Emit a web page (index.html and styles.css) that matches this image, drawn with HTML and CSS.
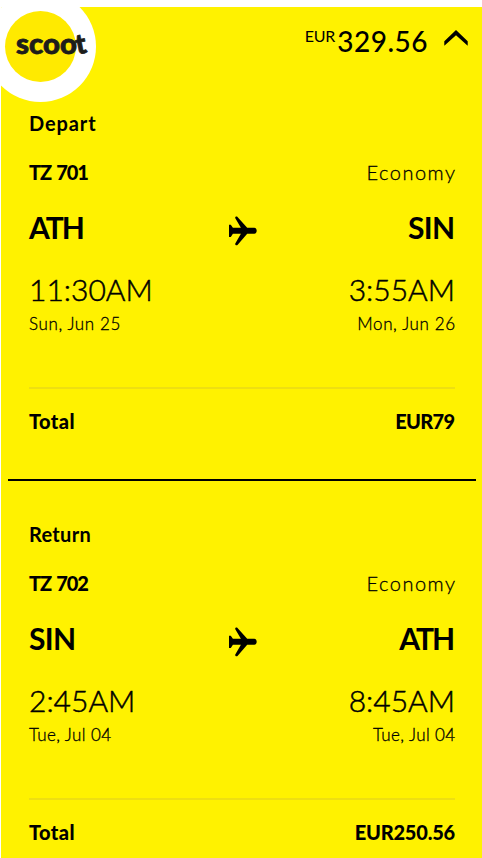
FILE: index.html
```html
<!DOCTYPE html>
<html lang="en">
<head>
	<title>Scoot fare summary</title>
	<meta charset="utf-8">
	<link rel="stylesheet" href="styles.css">
</head>
<body>
	<svg width="0" height="0" class="defs">
		<symbol id="plane" viewBox="0 0 28 30">
			<path d="M0 8.7h1.8l2.1 3.1h8L6.3 2.3C5.7 1 7.5-.1 8.5 1l9.7 10.8h7.1c3.2 0 3.2 6 0 6h-7.1L8.5 28.9c-1 1-2.8 0-2.2-1.4l5.6-9.7h-8L1.8 21H0z"/>
		</symbol>
	</svg>
	<main class="card">
		<header class="header">
			<svg class="logo" width="111" height="111" viewBox="0 0 111 111">
				<circle cx="55.5" cy="55.5" r="55.5" fill="#fff"/>
				<circle cx="55.5" cy="55.5" r="35.5" fill="#ffea00"/>
				<text class="logo-text" x="31" y="63" textLength="61" lengthAdjust="spacingAndGlyphs">scoo</text>
				<text class="logo-text" x="90.5" y="62.5" transform="rotate(-11 96 54)">t</text>
			</svg>
			<div class="price"><span class="currency">EUR</span><span class="amount">329.56</span></div>
			<svg class="chevron" width="24" height="17" viewBox="0 0 24 17">
				<path d="M12 0l11.7 11.2v4.6L12 5.2.3 15.8v-4.6z"/>
			</svg>
		</header>

		<section class="leg">
			<h2 class="title depart">Depart</h2>
			<div class="row flight"><b>TZ 701</b><span class="cabin">Economy</span></div>
			<div class="row route">
				<b class="ath">ATH</b>
				<svg class="plane" width="28" height="30"><use href="#plane"/></svg>
				<b class="sin">SIN</b>
			</div>
			<div class="row times"><span>11:30AM</span><span>3:55AM</span></div>
			<div class="row dates"><span>Sun, Jun 25</span><span>Mon, Jun 26</span></div>
			<div class="row total"><b>Total</b><b class="fare short">EUR79</b></div>
		</section>

		<hr class="divider">

		<section class="leg">
			<h2 class="title">Return</h2>
			<div class="row flight"><b>TZ 702</b><span class="cabin">Economy</span></div>
			<div class="row route">
				<b class="sin">SIN</b>
				<svg class="plane" width="28" height="30"><use href="#plane"/></svg>
				<b class="ath">ATH</b>
			</div>
			<div class="row times"><span>2:45AM</span><span>8:45AM</span></div>
			<div class="row dates return"><span>Tue, Jul 04</span><span>Tue, Jul 04</span></div>
			<div class="row total"><b>Total</b><b class="fare">EUR250.56</b></div>
		</section>
	</main>
</body>
</html>
```
FILE: styles.css
```css
* {
	box-sizing: border-box;
}

body {
	background: #fff;
	color: #000;
	font-family: Lato, "Liberation Sans", sans-serif;
	margin: 0;
	padding: 7px 0 0 1px;
}

.defs {
	position: absolute;
}

.card {
	background: #fff200;
	height: 851px;
	overflow: hidden;
	position: relative;
}

.header {
	display: flex;
	height: 73px;
	justify-content: flex-end;
	padding-right: 14px;
}

/* badge hangs over the top left corner */
.logo {
	left: -16px;
	position: absolute;
	top: -16px;
}

.logo-text {
	fill: #1d1d1b;
	font-size: 28px;
	font-weight: 900;
	stroke: #1d1d1b;
	stroke-width: 0.8px;
}

.price {
	display: flex;
	margin: 17px 16px 0 0;
}

.currency {
	font-size: 16px;
	letter-spacing: -0.2px;
	line-height: 20px;
	margin: 2px 2px 0 0;
}

.amount {
	font-size: 28px;
	font-weight: 500;
	letter-spacing: 0.5px;
	line-height: 34px;
}

.chevron {
	margin-top: 23px;
}

.leg {
	padding: 31px 27px 0 28px;
}

.row {
	display: flex;
	justify-content: space-between;
}

.title,
.flight,
.total {
	font-size: 20px;
	font-weight: bold;
	line-height: 24px;
	margin: 0 0 25px;
}

.title {
	letter-spacing: 0.3px;
}

.depart {
	letter-spacing: 0.9px;
}

.flight b {
	letter-spacing: -1.2px;
	word-spacing: 2px;
}

.cabin {
	-webkit-text-stroke: 0.3px #000;
	font-weight: 300;
	letter-spacing: 1.5px;
	margin-right: -1.5px;
}

.route {
	font-size: 30px;
	line-height: 36px;
	margin-bottom: 26px;
	position: relative;
}

.ath {
	letter-spacing: -2px;
	margin-right: 2px;
}

.sin {
	letter-spacing: -0.7px;
	margin-right: 0.7px;
}

.plane {
	left: 200px;
	position: absolute;
	top: 7px;
}

.times {
	-webkit-text-stroke: 0.5px #000;
	font-size: 30px;
	font-weight: 300;
	line-height: 36px;
	margin-bottom: 7px;
}

.dates {
	-webkit-text-stroke: 0.3px #000;
	font-size: 17px;
	font-weight: 300;
	letter-spacing: 0.6px;
	line-height: 20px;
	margin-bottom: 53px;
}

.dates span:last-child {
	margin-right: -0.6px;
}

.return {
	letter-spacing: 0.4px;
}

.total {
	border-top: 2px solid #eedf12;
	letter-spacing: 0.4px;
	margin: 0;
	padding-top: 20px;
}

.fare {
	letter-spacing: -0.2px;
}

.short {
	letter-spacing: -0.7px;
	margin-right: 0.7px;
}

.divider {
	background: #000;
	border: 0;
	height: 2px;
	margin: 46px 6px 10px 7px;
}
```
